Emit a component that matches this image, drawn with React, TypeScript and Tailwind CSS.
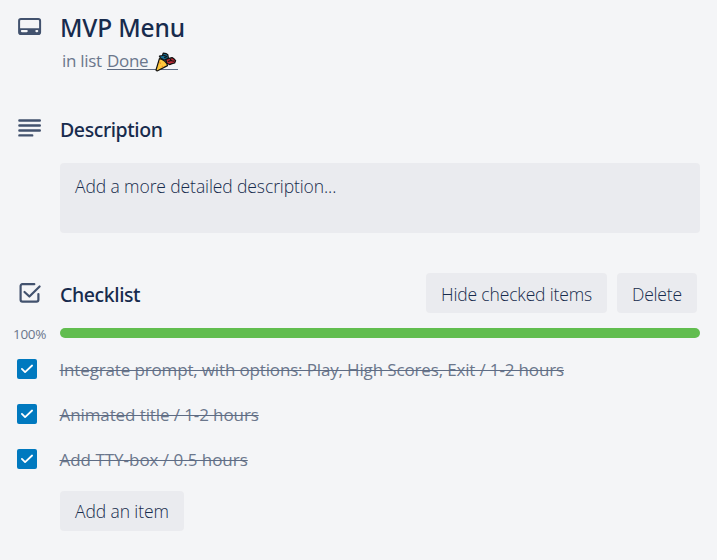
import type { ReactNode } from "react";

function CardIcon() {
  return (
    <svg className="block h-5 w-6" viewBox="0 0 24 20" fill="none">
      <rect x="1.1" y="2.1" width="21" height="15" rx="1.8" stroke="#42526e" strokeWidth="2" />
      <path fillRule="evenodd" fill="#42526e" d="M1.5 11.2h20.4v5.9h-20.4zM3.9 13h4.8a1.1 1.1 0 0 1 0 2.2H3.9a1.1 1.1 0 0 1 0-2.2zM18.4 13h.8a1.1 1.1 0 0 1 0 2.2h-.8a1.1 1.1 0 0 1 0-2.2z" />
    </svg>
  );
}

function DescriptionIcon() {
  return (
    <svg className="block h-5 w-6" viewBox="0 0 24 20" fill="none" stroke="#42526e" strokeWidth="2.4" strokeLinecap="round">
      <path d="M1.4 2.5h20.4M1.4 7.5h20.4M1.4 12.5h20.4M1.4 17.4h12.8" />
    </svg>
  );
}

function ChecklistIcon() {
  return (
    <svg className="block h-5 w-6" viewBox="0 0 24 20" fill="none" stroke="#42526e" strokeWidth="2.2" strokeLinecap="round" strokeLinejoin="round">
      <path d="M16.3 1.2H4.3a1.7 1.7 0 0 0-1.7 1.7v13.8a1.9 1.9 0 0 0 1.9 1.9h14a1.9 1.9 0 0 0 1.9-1.9V11" />
      <path d="M6.5 9l4.9 4.5L21.6 3.5" />
    </svg>
  );
}

function PartyIcon() {
  return (
    <svg className="absolute left-0 top-[3px] h-5 w-[22px]" viewBox="0 0 23 22" preserveAspectRatio="none" strokeLinejoin="round" stroke="#111">
      <path d="M4.6 4.6l3.2-.8.8-2.6 3.2.6 1.6 1.2.6 3.6-2.3 2.5-3.4-.9-2.4-1.4z" fill="#176d91" strokeWidth="1.3" />
      <path d="M11.2 8.2l3.6-1.1 3-.9 2 1.3 1.7 2-1 2.6-2.7.7-2.6 1-2.9-1.4z" fill="#c42b35" strokeWidth="1.4" />
      <path d="M4.6 7.2c3.9.5 7.8 4 8.5 7.8L2.7 20.6c-1 .4-1.8-.2-1.5-1.3z" fill="#ffc83d" strokeWidth="1.3" />
      <path d="M8.6 3.6l3.4 1.2M9.6 6.3l3-1.3M15.8 7.5l1.4 2.2 2.8.4M13.4 10.5l3-1" fill="none" strokeWidth="1.2" />
      <path d="M4.7 10.6l1.2 2.2M7.2 15.2l1.3 1.6" fill="none" stroke="#f28b22" strokeWidth="1.2" />
    </svg>
  );
}

function SubtleButton({ children, className }: { children: ReactNode; className: string }) {
  return (
    <button className={`h-10 shrink-0 whitespace-nowrap rounded bg-[#eaebef] pl-[15px] text-left text-[17.5px] font-light ${className}`}>
      {children}
    </button>
  );
}

const items = [
  { label: "Integrate prompt, with options: Play, High Scores, Exit / 1-2 hours", tracking: "tracking-[-0.15px]" },
  { label: "Animated title / 1-2 hours", tracking: "tracking-[-0.1px]" },
  { label: "Add TTY-box / 0.5 hours", tracking: "tracking-[-0.02px]" },
];

export default function App() {
  return (
    <main className="h-[560px] w-[717px] overflow-hidden bg-[#f4f5f7] font-['Noto_Sans','Open_Sans',sans-serif] text-[#172b4d]">
      <header className="flex pl-[18px] pt-[17px]">
        <CardIcon />
        <div className="ml-[18px]">
          <h1 className="-mt-[4px] h-[30px] text-[24.5px] font-medium leading-[30px] tracking-[-0.15px]">MVP Menu</h1>
          <p className="ml-0.5 mt-[6px] flex h-6 items-start whitespace-pre font-['Open_Sans','Noto_Sans',sans-serif] text-[17px] leading-6 tracking-[-0.3px] text-[#6b778c]">
            <span className="w-[45px]">in list</span>
            <span className="relative h-[21px] w-[71px] border-b border-[#5e6c84]">
              Done
              <span className="absolute left-12 top-0"><PartyIcon /></span>
            </span>
          </p>
        </div>
      </header>

      <section className="mt-[45px]">
        <div className="flex pl-[18px]">
          <DescriptionIcon />
          <h2 className="ml-[18px] h-6 text-[19.5px] font-medium leading-6 tracking-[-0.4px]">Description</h2>
        </div>
        <div className="ml-[60px] mt-[21px] h-[70px] w-[640px] rounded bg-[#eaebef] pl-[15px] pt-[11px] font-['Open_Sans','Noto_Sans',sans-serif] text-[17.5px] font-light leading-6 tracking-[-0.1px]">
          Add a more detailed description...
        </div>
      </section>

      <section className="mt-10">
        <div className="flex h-10 pl-[18px] pr-5">
          <div className="pt-[10px]"><ChecklistIcon /></div>
          <h2 className="ml-[18px] flex-1 pt-[10px] text-[19.5px] font-medium leading-6 tracking-[-0.4px]">Checklist</h2>
          <div className="flex gap-[10px] font-['Open_Sans','Noto_Sans',sans-serif]">
            <SubtleButton className="w-[181px] pt-[3px] tracking-[-0.15px]">Hide checked items</SubtleButton>
            <SubtleButton className="w-20 pt-[3px] tracking-[-0.2px]">Delete</SubtleButton>
          </div>
        </div>
        <div className="mt-[10px] flex h-5 items-center pl-[13px] font-['Open_Sans','Noto_Sans',sans-serif]">
          <span className="w-[47px] pt-0.5 text-[13.5px] tracking-[-0.3px] text-[#6b778c]">100%</span>
          <div className="h-[10px] w-[640px] rounded-full bg-[#61bd4f]" />
        </div>
        <ul className="mt-[3px] font-['Open_Sans','Noto_Sans',sans-serif]">
          {items.map((item) => (
            <li key={item.label} className="flex h-[45px] items-center pl-[17px]">
              <span className="flex h-5 w-5 items-center justify-center rounded-[2px] bg-[#0079bf]">
                <svg className="block h-5 w-5" viewBox="0 0 20 20" fill="none" stroke="white" strokeWidth="1.8" strokeLinecap="round" strokeLinejoin="round">
                  <path d="M4.9 9.9l3.2 3.2 7-6.6" />
                </svg>
              </span>
              <span className={`ml-[22.5px] mt-0.5 whitespace-nowrap text-[17px] leading-6 text-[#6b778c] line-through decoration-[#5e6c84] decoration-1 ${item.tracking}`}>
                {item.label}
              </span>
            </li>
          ))}
        </ul>
        <div className="ml-[60px] mt-[10px] font-['Open_Sans','Noto_Sans',sans-serif]">
          <SubtleButton className="w-[124px] pt-px tracking-[-0.1px]">Add an item</SubtleButton>
        </div>
      </section>
    </main>
  );
}
